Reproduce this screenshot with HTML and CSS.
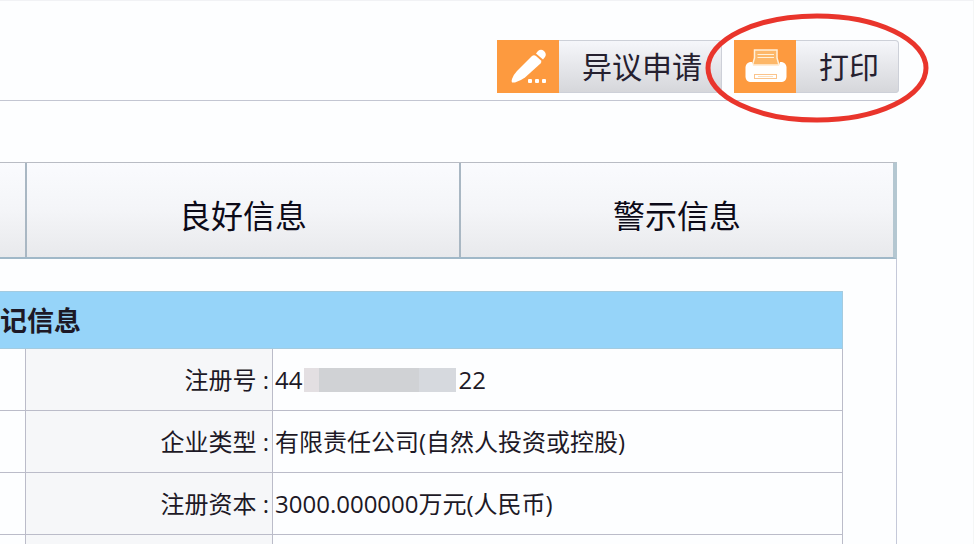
FILE: index.html
```html
<!DOCTYPE html>
<html lang="zh-CN">
<head>
    <meta charset="UTF-8">
    <meta name="viewport" content="width=device-width, initial-scale=1.0">
    <title>登记信息</title>
    <link rel="stylesheet" href="styles.css">
</head>
<body>

<div class="toolbar">
    <button type="button" class="tool-btn">
        <span class="tool-icon">
            <svg width="62" height="53" viewBox="0 0 62 53">
                <path d="M15 42.5 Q14 42 15 39 Q17 34 20 31 L35 16 Q37 14.5 39 16 L44 20.5 Q45 22 43.5 23.5 L28 37.5 Q24 40.5 18 42.5 Z" fill="#fff"/>
                <path d="M39 13.5 L41 11 Q44 8.500 47 11 Q50 14 48 17 L46 19.500 Z" fill="#fff"/>
                <rect x="31" y="39" width="4" height="4" rx="1" fill="#fff"/>
                <rect x="38" y="39" width="4" height="4" rx="1" fill="#fff"/>
                <rect x="45" y="39" width="4" height="4" rx="1" fill="#fff"/>
            </svg>
        </span>
        <span class="tool-text">异议申请</span>
    </button>
    <div class="print-wrap">
        <button type="button" class="tool-btn">
            <span class="tool-icon">
                <svg width="62" height="53" viewBox="0 0 62 53">
                    <path d="M20.500 10 H43 V18 L45 25 H18.500 L20.500 18 Z" fill="#fdb768" stroke="#fff0d9" stroke-width="1.500"/>
                    <path d="M23.500 14.500 H40 M23.500 17.500 H40" stroke="#fff0d9" stroke-width="1.200"/>
                    <path d="M16 22 H18 L19 25.500 H45 L46 22 H48 Q52 23 52.500 27 V37 Q52 41.500 48 42 H16 Q12 41.500 11.500 37 V27 Q12 23 16 22 Z" fill="#fff"/>
                    <rect x="20.500" y="34.500" width="22" height="4" fill="#fff" stroke="#fbc48c"/>
                    <path d="M24 36.500 H39" stroke="#fde0bf"/>
                </svg>
            </span>
            <span class="tool-text">打印</span>
        </button>
        <svg class="circle-mark" width="224" height="112" viewBox="0 0 224 112">
            <ellipse cx="112" cy="57" rx="109" ry="52" fill="none" stroke="#e9352c" stroke-width="5"/>
        </svg>
    </div>
</div>

<div class="panel">
    <div class="tabs">
        <div class="tab tab-cut"></div>
        <a class="tab" href="#">良好信息</a>
        <a class="tab" href="#">警示信息</a>
    </div>

    <table class="info">
        <colgroup>
            <col class="col-side">
            <col class="col-name">
            <col>
        </colgroup>
        <thead>
            <tr><th class="info-title" colspan="3">记信息</th></tr>
        </thead>
        <tbody>
            <tr>
                <td></td>
                <th class="name" scope="row">注册号 :</th>
                <td>44<span class="mosaic"></span>22</td>
            </tr>
            <tr>
                <td></td>
                <th class="name" scope="row">企业类型 :</th>
                <td>有限责任公司(自然人投资或控股)</td>
            </tr>
            <tr>
                <td></td>
                <th class="name" scope="row">注册资本 :</th>
                <td>3000.000000万元(人民币)</td>
            </tr>
            <tr>
                <td></td>
                <th class="name" scope="row"></th>
                <td></td>
            </tr>
        </tbody>
    </table>
</div>

</body>
</html>
```

FILE: styles.css
```css
* {
    box-sizing: border-box;
    margin: 0;
    padding: 0;
}

body {
    display: flex;
    flex-direction: column;
    font-family: "Open Sans", "Noto Sans CJK SC", sans-serif;
    background-color: #fdfeff;
    color: #1d1926;
    height: 100vh;
    overflow: hidden;
    border-top: 1px solid #f1f2f5;
    border-right: 1px solid #f4f6f6;
}

/* top buttons */
.toolbar {
    display: flex;
    justify-content: flex-end;
    gap: 12px;
    margin-right: 74px;
    padding: 39px 0 7px;
    border-bottom: 1px solid #c3c6d2;
}

.tool-btn {
    display: flex;
    height: 53px;
    border: none;
    border-radius: 4px;
    background: linear-gradient(#f6f7fb, #d5d6da);
    box-shadow: inset 0 0 0 1px #cdd0d8;
    font-family: inherit;
    color: #25202f;
    cursor: pointer;
}

.tool-icon {
    width: 62px;
    height: 53px;
    background-color: #fd9a3f;
}

.tool-icon svg {
    display: block;
}

.tool-text {
    padding: 0 20px 0 23px;
    font-size: 30px;
    line-height: 53px;
}

.print-wrap {
    position: relative;
}

.circle-mark {
    position: absolute;
    top: 50%;
    left: 50%;
    transform: translate(-50%, -50%);
    pointer-events: none;
}

/* tabs and content */
.panel {
    flex: 1;
    min-height: 0;
    margin: 61px 76px 0 0;
    border-right: 1px solid #c5c9d9;
}

.tabs {
    display: flex;
    height: 97px;
    margin-right: -1px;
    border-top: 1px solid #b9bcc4;
    border-bottom: 2px solid #a0b8c8;
    border-right: 4px solid #b4c7d1;
}

.tab {
    flex: 1;
    padding-top: 12px;
    border-right: 2px solid #a9b7c3;
    background: linear-gradient(#fafbfe, #f4f5f8 50%, #e8e9ec);
    color: #0c0a18;
    font-size: 32px;
    line-height: 82px;
    text-align: center;
    text-decoration: none;
}

.tab:last-child {
    border-right: none;
}

.tab-cut {
    flex: 0 0 27px;
}

.info {
    width: calc(100% - 50px);
    margin: 32px 0 0 -3px;
    border-collapse: collapse;
    table-layout: fixed;
}

.col-side {
    width: 28px;
}

.col-name {
    width: 247px;
}

.info th,
.info td {
    height: 62px;
    padding: 1px 3px 0 2px;
    border: 1px solid #bbbcc9;
    font-size: 24px;
    line-height: 32px;
    font-weight: normal;
    text-align: left;
}

.info .info-title {
    height: 57px;
    border-color: #a4cbe0;
    background-color: #96d4f9;
    font-size: 27px;
    font-weight: bold;
}

.info .name {
    background-color: #f6f7f9;
    text-align: right;
}

.mosaic {
    display: inline-block;
    width: 152px;
    height: 24px;
    margin: 0 2px;
    vertical-align: -3px;
    background: linear-gradient(90deg, #e3dfe2 15px, #d0d2d5 15px, #d0d2d5 115px, #d6d9de 115px);
}
```
